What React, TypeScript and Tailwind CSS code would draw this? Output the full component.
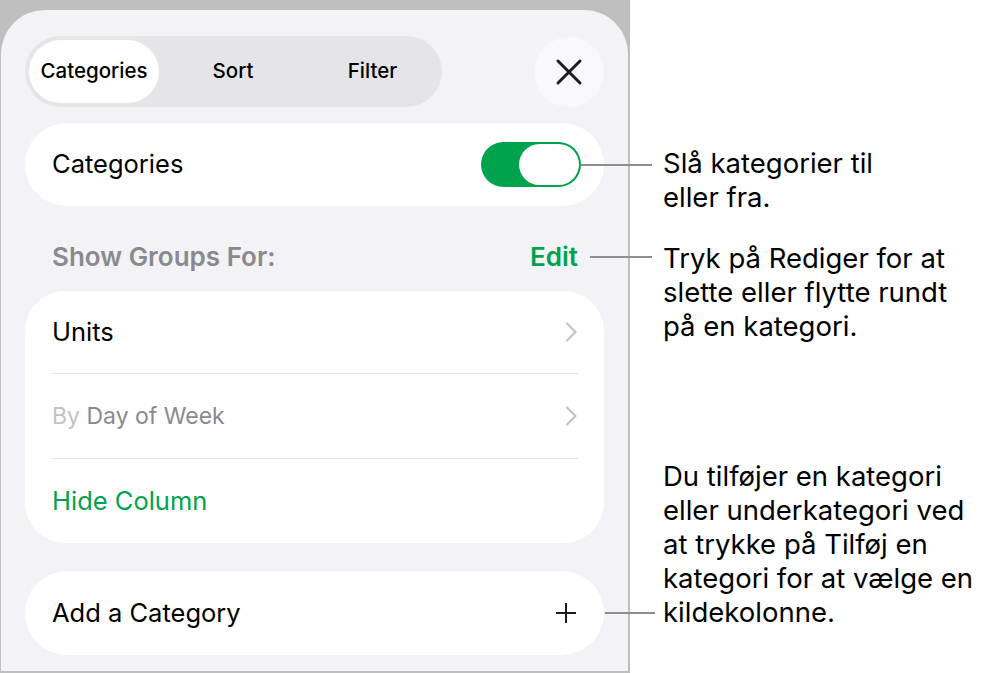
import React from "react";

const font = { fontFamily: "Inter, 'Noto Sans', 'Liberation Sans', sans-serif" };

function Chevron() {
  return (
    <svg width="14" height="22" viewBox="0 0 14 22" fill="none">
      <path d="M3 2.5 L11.5 11 L3 19.5" stroke="#c4c4c8" strokeWidth="2.2" strokeLinecap="round" strokeLinejoin="round" />
    </svg>
  );
}

export default function App() {
  return (
    <div className="relative flex w-[1001px] h-[673px] bg-white text-black" style={font}>
      {/* Panel */}
      <div className="w-[630px] h-[673px] bg-[#bfbfbf] pt-[10px] pl-px pr-[2px] pb-[2px]">
        <div className="h-full bg-[#f2f2f7] rounded-t-[44px] px-[24px] pt-[26px] flex flex-col">
          {/* Top row */}
          <div className="flex items-center justify-between">
            <div className="flex h-[71px] w-[417px] items-center rounded-full bg-[#e4e4e9] p-[4px]">
              <div className="flex h-[63px] w-[130px] items-center justify-center rounded-full bg-white shadow-[0_0_0_1px_#e6e6ea] text-[20.5px] font-medium">
                Categories
              </div>
              <div className="flex h-[63px] w-[148px] items-center justify-center text-[20.5px] font-medium">Sort</div>
              <div className="flex h-[63px] w-[131px] items-center justify-center text-[20.5px] font-medium">Filter</div>
            </div>
            <div className="flex h-[70px] w-[70px] items-center justify-center rounded-full bg-[#f9f9fc]">
              <svg width="28" height="28" viewBox="0 0 28 28">
                <path d="M3 3 L25 25 M25 3 L3 25" stroke="#1c1c1e" strokeWidth="3" strokeLinecap="round" />
              </svg>
            </div>
          </div>

          {/* Categories toggle card */}
          <div className="mt-[16px] flex h-[83px] items-center justify-between rounded-[42px] bg-white pl-[27px] pr-[23px]">
            <span className="text-[25.5px]">Categories</span>
            <div className="flex h-[45px] w-[100px] items-center justify-end rounded-full bg-[#00a34d] pr-[2px]">
              <div className="h-[41px] w-[60px] rounded-full bg-white" />
            </div>
          </div>

          {/* Header */}
          <div className="flex h-[85px] items-center justify-between pl-[27px] pr-[26px] pt-[15px]">
            <span className="text-[26px] font-semibold text-[#8a8a8e]">Show Groups For:</span>
            <span className="text-[26px] font-semibold text-[#00a34d]">Edit</span>
          </div>

          {/* Groups card */}
          <div className="flex h-[252px] flex-col rounded-[40px] bg-white pl-[27px] pr-[26px]">
            <div className="flex h-[83px] items-center justify-between border-b-[1.5px] border-[#e3e3e8]">
              <span className="text-[25.5px]">Units</span>
              <Chevron />
            </div>
            <div className="flex h-[85px] items-center justify-between border-b-[1.5px] border-[#e3e3e8]">
              <span className="text-[23px]">
                <span className="text-[#c2c2c6]">By</span>
                <span className="text-[#8a8a8e]"> Day of Week</span>
              </span>
              <Chevron />
            </div>
            <div className="flex h-[84px] items-center">
              <span className="text-[25.5px] text-[#00a34d]">Hide Column</span>
            </div>
          </div>

          {/* Add card */}
          <div className="mt-[28px] flex h-[84px] items-center justify-between rounded-[42px] bg-white pl-[27px] pr-[27px]">
            <span className="text-[25.5px]">Add a Category</span>
            <svg width="22" height="22" viewBox="0 0 22 22">
              <path d="M11 1 V21 M1 11 H21" stroke="#1c1c1e" strokeWidth="2" />
            </svg>
          </div>
        </div>
      </div>

      {/* Annotations */}
      <div className="flex flex-col pl-[33px] text-[27.5px] leading-[34px] text-black">
        <p className="mt-[146px]">Slå kategorier til<br />eller fra.</p>
        <p className="mt-[27px]">Tryk på Rediger for at<br />slette eller flytte rundt<br />på en kategori.</p>
        <p className="mt-[116px]">Du tilføjer en kategori<br />eller underkategori ved<br />at trykke på Tilføj en<br />kategori for at vælge en<br />kildekolonne.</p>
      </div>

      {/* Callout lines */}
      <div className="absolute left-[581px] top-[164px] h-[2px] w-[71px] bg-[#8e8e8e]" />
      <div className="absolute left-[590px] top-[256px] h-[2px] w-[62px] bg-[#8e8e8e]" />
      <div className="absolute left-[605px] top-[612px] h-[2px] w-[50px] bg-[#8e8e8e]" />
    </div>
  );
}
